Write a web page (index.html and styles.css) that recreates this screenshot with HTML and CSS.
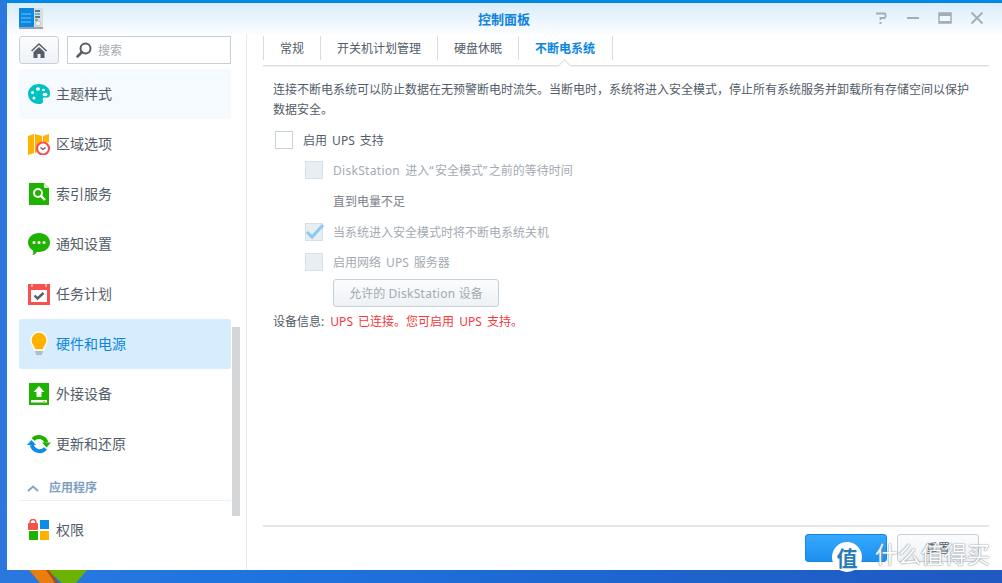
FILE: index.html
```html
<!DOCTYPE html>
<html lang="zh">
<head>
<meta charset="utf-8">
<title>控制面板</title>
<link rel="stylesheet" href="styles.css">
</head>
<body>
<div class="desktop">
  <svg class="wallpaper" width="100" height="13" viewBox="0 0 100 13"><path d="M29 0h22l3 13H40z" fill="#e87f0c"/><path d="M47 0h40L76 13H62z" fill="#6cb200"/><path d="M46 0l9 13h3L49 0z" fill="#b4480a"/></svg>
  <div class="window">
    <header class="titlebar">
      <svg class="app-icon" width="24" height="21" viewBox="0 0 24 21"><rect width="24" height="20" y="0" fill="#d8dde2"/><rect width="15" height="20" fill="#0b86e2"/><rect y="19" width="24" height="2" fill="#9aa3ab"/><path d="M2 6h10M2 10h10M2 14h10" stroke="#6cc4f7"/><path d="M16 3h5" stroke="#3b4450" stroke-width="1.4"/><path d="M16 6h5" stroke="#2aa6e8" stroke-width="1.4"/><path d="M16 9h5" stroke="#3b4450" stroke-width="1.4"/><path d="M16 12h3" stroke="#33b24a" stroke-width="1.4"/><circle cx="19" cy="15.500" r="2.500" fill="#f3f6f8" stroke="#aab2ba" stroke-width=".7"/></svg>
      <h1 class="title">控制面板</h1>
      <div class="win-controls">
        <svg width="14" height="14" viewBox="0 0 14 14"><path d="M2 2.500h9l.5 1v2.500l-1 1H6.500v2" fill="none" stroke="#a5acb4" stroke-width="1.800"/><rect x="5.500" y="11" width="2" height="2" fill="#a5acb4"/></svg>
        <svg width="14" height="14" viewBox="0 0 14 14"><rect x="1" y="6" width="12" height="2" fill="#a5acb4"/></svg>
        <svg width="14" height="14" viewBox="0 0 14 14"><path d="M1 2h12v10H1z" fill="#fff" fill-opacity=".3" stroke="#a5acb4" stroke-width="1.500"/><rect x="1" y="2" width="12" height="3" fill="#a5acb4"/><rect x="1" y="10" width="12" height="2" fill="#a5acb4"/></svg>
        <svg width="14" height="14" viewBox="0 0 14 14"><path d="M1.500 1.500l11 11M12.500 1.500l-11 11" stroke="#a5acb4" stroke-width="1.800"/></svg>
      </div>
    </header>
    <div class="body">
      <aside class="sidebar">
        <div class="toolbar">
          <button class="home" aria-label="主页"><svg width="16" height="15" viewBox="0 0 16 15"><path d="M8 0L0 7.500l1 1L8 2l7 6.500 1-1z" fill="#555e69"/><path d="M2.500 9L8 4l5.500 5v6H9.500v-4h-3v4h-4z" fill="#555e69"/></svg></button>
          <label class="search">
            <svg width="16" height="16" viewBox="0 0 16 16"><circle cx="9.500" cy="6.500" r="5" fill="none" stroke="#555e69" stroke-width="2"/><path d="M6 10l-4.500 4.500" stroke="#555e69" stroke-width="2.500" stroke-linecap="round"/></svg>
            <span>搜索</span>
          </label>
        </div>
        <ul class="menu">
          <li class="item hover"><svg width="24" height="22" viewBox="0 0 24 22"><path d="M12 1C5 1 1 6 1 11s4.500 10 11 10c4 0 4-2 4-3s-1-2 0-3 3 0 5-.5 2-3 2-4.500C23 5 18 1 12 1z" fill="#00c2c2"/><ellipse cx="11" cy="6" rx="2" ry="1.700" fill="#fff"/><ellipse cx="16.500" cy="7" rx="1.500" ry="1.200" fill="#fff"/><ellipse cx="18" cy="11.500" rx="2.500" ry="1.800" fill="#fff"/><circle cx="5.500" cy="9.500" r="1.500" fill="#fff"/><circle cx="7" cy="15" r="1.500" fill="#fff"/></svg><span>主题样式</span></li>
          <li class="item"><svg width="24" height="22" viewBox="0 0 24 22"><path d="M1 3l6-2v19l-6 2zM8 1l7 2v9l-3 6-4 2zM16 3l6-2v8l-6 1z" fill="#ffb300"/><circle cx="16" cy="15.500" r="6" fill="#fff" stroke="#f4524f" stroke-width="2.200"/><path d="M13.500 14.500l2.500 2 2.500-2" fill="none" stroke="#555e69" stroke-width="1.300"/></svg><span>区域选项</span></li>
          <li class="item"><svg width="24" height="22" viewBox="0 0 24 22"><path d="M2 0h15l5 5v17H2z" fill="#1eb300"/><path d="M17 0l5 5h-5z" fill="#d7f3d0"/><circle cx="11" cy="10" r="4" fill="none" stroke="#fff" stroke-width="2"/><path d="M14 13l4 4" stroke="#fff" stroke-width="2.400"/></svg><span>索引服务</span></li>
          <li class="item"><svg width="24" height="22" viewBox="0 0 24 22"><path d="M12 0c6 0 11 4 11 9.500S18 19 12 19c-1 0-2 0-2-.2C8.500 21 7 22 5.500 22c1-1.500 1-3 .5-4.500C3 16 1 13 1 9.500 1 4 6 0 12 0z" fill="#1eb300"/><circle cx="7" cy="9.500" r="1.500" fill="#fff"/><circle cx="12" cy="9.500" r="1.500" fill="#fff"/><circle cx="17" cy="9.500" r="1.500" fill="#fff"/></svg><span>通知设置</span></li>
          <li class="item"><svg width="24" height="22" viewBox="0 0 24 22"><rect x="1" y="1" width="22" height="21" fill="#f4524f"/><rect x="4" y="7" width="16" height="12" fill="#fff"/><path d="M5 0v4M19 0v4" stroke="#fff" stroke-width="1"/><path d="M7.500 12.500l3 3 6-5.500" fill="none" stroke="#555e69" stroke-width="2.400"/></svg><span>任务计划</span></li>
          <li class="item active"><svg width="24" height="26" viewBox="0 0 24 26"><path d="M12 1a8 8 0 0 0-8 9c0 4 3 5 3.500 9h9c.5-4 3.500-5 3.500-9a8 8 0 0 0-8-9z" fill="#ffb300" stroke="#fff" stroke-width="1.400"/><path d="M8 21h8M9 23h6" stroke="#8a929c" stroke-width="1.200"/></svg><span>硬件和电源</span></li>
          <li class="item"><svg width="24" height="22" viewBox="0 0 24 22"><rect x="2" width="20" height="22" fill="#1eb300"/><path d="M12 3l5.500 6H14.500v5h-5V9H6.500z" fill="#fff"/><rect x="4" y="17" width="16" height="2.500" fill="#fff"/><rect x="16" y="18" width="2" height="1" fill="#ffb300"/></svg><span>外接设备</span></li>
          <li class="item"><svg width="24" height="22" viewBox="0 0 24 22"><path d="M6 6.500A8 8 0 0 1 19.500 9.500" fill="none" stroke="#1eb300" stroke-width="4"/><path d="M15 9.500h9l-4.500 5z" fill="#1eb300"/><path d="M18.500 15.500A8 8 0 0 1 4.800 12" fill="none" stroke="#0a8ce8" stroke-width="4"/><path d="M0 12h9L4.500 7z" fill="#0a8ce8"/></svg><span>更新和还原</span></li>
          <li class="section"><svg width="12" height="7" viewBox="0 0 12 7"><path d="M1 6l5-4.500L11 6" fill="none" stroke="#86a5bf" stroke-width="2"/></svg><span>应用程序</span></li>
          <li class="item"><svg width="24" height="22" viewBox="0 0 24 22"><path d="M3 3.500a3 3 0 0 1 6 0V5H3z" fill="none" stroke="#f4524f" stroke-width="1.500"/><rect x="1" y="4" width="10" height="7" rx="1" fill="#f4524f"/><rect x="13" y="1" width="9" height="9" fill="#0a8ce8"/><rect x="2" y="12" width="9" height="9" fill="#1eb300"/><rect x="13" y="12" width="9" height="9" fill="#ffb300"/></svg><span>权限</span></li>
        </ul>
        <div class="scrollbar"></div>
      </aside>
      <main class="main">
        <nav class="tabs">
          <a class="tab">常规</a>
          <a class="tab">开关机计划管理</a>
          <a class="tab">硬盘休眠</a>
          <a class="tab current">不断电系统</a>
        </nav>
        <section class="pane">
          <p class="intro">连接不断电系统可以防止数据在无预警断电时流失。当断电时，系统将进入安全模式，停止所有系统服务并卸载所有存储空间以保护数据安全。</p>
          <div class="check-row"><span class="box"></span><span class="label">启用 UPS 支持</span></div>
          <div class="options">
            <div class="check-row sub disabled"><span class="box"></span><span class="label"><span class="lat">DiskStation</span> 进入<span class="quote">“</span>安全模式<span class="quote">”</span>之前的等待时间</span></div>
            <div class="value">直到电量不足</div>
            <div class="check-row sub disabled"><span class="box"><svg width="20" height="18" viewBox="0 0 20 18"><path d="M2 9l5 5L18 2" fill="none" stroke="#8cc8f4" stroke-width="3"/></svg></span><span class="label">当系统进入安全模式时将不断电系统关机</span></div>
            <div class="check-row sub disabled"><span class="box"></span><span class="label">启用网络 UPS 服务器</span></div>
            <button class="btn allow">允许的 <span class="lat">DiskStation</span> 设备</button>
          </div>
          <p class="device">设备信息: <em>UPS 已连接。您可启用 UPS 支持。</em></p>
        </section>
        <footer class="actions">
          <button class="btn primary"></button>
          <button class="btn">重置</button>
        </footer>
      </main>
    </div>
  </div>
  <div class="watermark"><span class="seal">值</span><span class="brand">什么值得买</span></div>
</div>
</body>
</html>
```
FILE: styles.css
```css
* { box-sizing: border-box; }
html, body { margin: 0; height: 100%; overflow: hidden; }
body { font: 12px/16px "Noto Sans", "Noto Sans CJK SC", sans-serif; color: #525c68; word-spacing: 2px; }
.desktop { position: relative; width: 1002px; height: 583px; padding-left: 7px; overflow: hidden;
  background: linear-gradient(90deg, #2a78de 0%, #1f74e0 25%, #1e62cc 70%, #2059c2 100%); }
.wallpaper { position: absolute; left: 0; bottom: 0; }
.window { position: relative; width: 995px; height: 570px; background: #fff; display: flex; flex-direction: column; }
.titlebar { height: 34px; flex: none; border-top: 3px solid #0086e5; display: flex; align-items: center; padding: 0 18px 0 12px; position: relative;
  background: linear-gradient(#d9ecfb, #fbfdff); }
.app-icon { margin-top: -1px; }
.title { position: absolute; left: 471px; top: 7px; margin: 0; font-size: 13px; line-height: 18px; font-weight: 700; color: #0f83e0; }
.win-controls { margin-left: auto; display: flex; gap: 18px; margin-top: -1px; }
.win-controls svg { display: block; }
.body { flex: 1; display: flex; min-height: 0; }
.sidebar { position: relative; width: 240px; flex: none; padding: 2px 15px 0 12px; border-right: 1px solid #e8eaec; }
.toolbar { display: flex; gap: 8px; height: 28px; }
.home { width: 40px; height: 28px; padding: 0; border: 1px solid #c6d0da; border-radius: 3px; background: linear-gradient(#fbfcfd, #eef2f6); display: flex; align-items: center; justify-content: center; }
.search { flex: 1; display: flex; align-items: center; gap: 6px; padding-left: 8px; border: 1px solid #c6d0da; color: #a4abb3; background: #fff; }
.search span { padding-top: 2px; }
.menu { list-style: none; margin: 5px 0 0; padding: 0; }
.item { height: 50px; display: flex; align-items: center; font-size: 14px; padding-left: 8px; gap: 5px; border-radius: 3px; }
.item svg { flex: none; width: 24px; }
.hover { background: #f5faff; }
.active { background: #d7edfe; color: #0a86e0; }
.section { height: 32px; margin-bottom: 4px; display: flex; align-items: center; gap: 10px; padding: 7px 0 0 8px; font-weight: 700; color: #7e9fbf; border-bottom: 1px solid #ecf1f5; }
.scrollbar { position: absolute; left: 225px; top: 293px; width: 8px; height: 189px; background: #d4d5d7; }
.main { flex: 1; min-width: 0; display: flex; flex-direction: column; padding: 2px 13px 8px 16px; }
.tabs { display: flex; height: 30px; border-bottom: 1px solid #d9dde1; position: relative; box-shadow: 0 1px 0 #f0f2f4; }
.tab { height: 24px; padding: 0 16px; line-height: 26px; border-left: 1px solid #d5dde5; }
.tab:last-child { border-right: 1px solid #d5dde5; padding-right: 17px; }
.current { color: #0a86e0; font-weight: 700; position: relative; }
.current::after { content: ""; position: absolute; left: 41px; top: 25px; width: 8px; height: 8px; background: #fff; border: 1px solid #d9dde1; border-right: 0; border-bottom: 0; transform: rotate(45deg); }
.pane { flex: 1; padding: 14px 10px 0; }
.intro { margin: 0; line-height: 20px; width: 698px; }
.check-row { display: flex; align-items: center; gap: 10px; height: 18px; }
.label { padding-top: 2px; }
.lat { letter-spacing: .3px; }
.quote { letter-spacing: 1.5px; }
.pane > .check-row { margin: 11px 0 0 2px; }
.box { width: 18px; height: 18px; flex: none; border: 1px solid #c7d3de; background: #fff; position: relative; }
.box svg { position: absolute; left: -1px; top: -1px; }
.options { margin-left: 32px; }
.sub { margin-top: 12px; color: #a3aab2; }
.disabled .box { background: #e9eef3; border-color: #d5dfe8; }
.value { margin: 14px 0 12px 28px; height: 18px; line-height: 18px; color: #7a8087; }
.btn { width: 82px; height: 28px; padding: 2px 0 0; border: 1px solid #c6d0da; border-radius: 3px; background: linear-gradient(#fbfcfd, #eef2f6); font: inherit; color: #555e69; }
.allow { display: block; width: 166px; margin: 8px 0 0 28px; color: #a3aab2; }
.device { margin: 7px 0 0; }
.device em { font-style: normal; color: #f5393c; margin-left: 1px; }
.actions { height: 37px; flex: none; border-top: 2px solid #e4e6e8; display: flex; justify-content: flex-end; align-items: flex-end; gap: 10px; padding-right: 10px; }
.primary { background: linear-gradient(#35a8ff, #1d90ee); border-color: #1786e0; }
.watermark { position: absolute; left: 832px; top: 542px; display: flex; align-items: center; gap: 13px; color: #fff; }
.seal { width: 30px; height: 30px; border-radius: 50%; background: #fff; color: #2a7cb8; font: 700 21px/30px "Noto Sans CJK SC", sans-serif; text-align: center; }
.brand { font-size: 23px; line-height: 24px; margin-top: -6px; white-space: nowrap; word-spacing: 0; opacity: .9; text-shadow: 0 0 1px #717981, 0 0 2px #8d959c; }
```
